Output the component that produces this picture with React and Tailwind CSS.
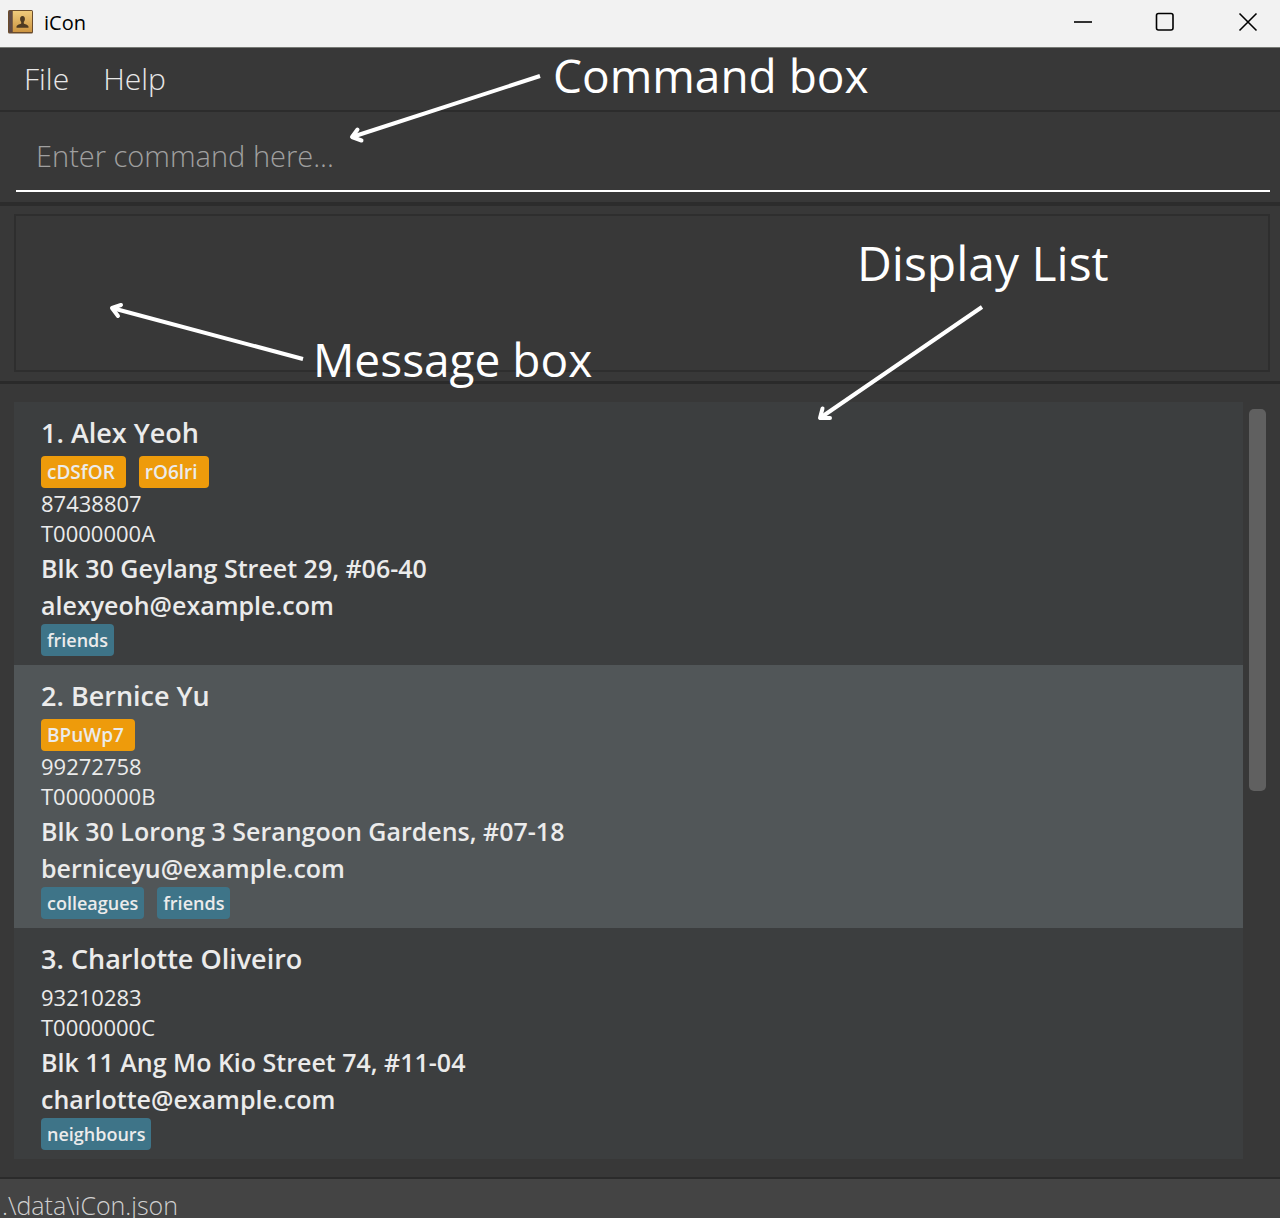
import React from "react";

const people = [
  {
    name: "Alex Yeoh",
    modules: ["cDSfOR", "rO6lri"],
    phone: "87438807",
    id: "T0000000A",
    address: "Blk 30 Geylang Street 29, #06-40",
    email: "alexyeoh@example.com",
    tags: ["friends"],
  },
  {
    name: "Bernice Yu",
    modules: ["BPuWp7"],
    phone: "99272758",
    id: "T0000000B",
    address: "Blk 30 Lorong 3 Serangoon Gardens, #07-18",
    email: "berniceyu@example.com",
    tags: ["colleagues", "friends"],
  },
  {
    name: "Charlotte Oliveiro",
    modules: [],
    phone: "93210283",
    id: "T0000000C",
    address: "Blk 11 Ang Mo Kio Street 74, #11-04",
    email: "charlotte@example.com",
    tags: ["neighbours"],
  },
];

function AppIcon() {
  return (
    <svg width="26" height="25" viewBox="0 0 26 25" aria-hidden="true">
      <defs>
        <linearGradient id="cover" x1="0" y1="0" x2="0" y2="1">
          <stop offset="0" stopColor="#f0cb7c" />
          <stop offset="1" stopColor="#cd9541" />
        </linearGradient>
      </defs>
      <rect x="0" y="0" width="25" height="23.500" rx="1.5" fill="#6b4c2c" />
      <rect x="4.5" y="1" width="19.500" height="21" fill="url(#cover)" />
      <rect x="1" y="1" width="3.5" height="21.500" fill="#5f4a45" />
      <path d="M14.500 6c1.700 0 2.600 1.300 2.400 3.200-.1 1.300-.7 2.200-1.100 2.800v1.500c.4.800 4.700 1 4.700 3.200v1H8.500v-1c0-2.200 4.300-2.400 4.700-3.200V12c-.5-.6-1-1.500-1.100-2.800C11.900 7.300 12.800 6 14.500 6z" fill="#4d3a22" />
    </svg>
  );
}

function TitleBar() {
  return (
    <header className="flex h-12 items-center justify-between border-b border-[#777a75] bg-[#f2f2f2] pb-[2px] pl-2 text-black">
      <div className="flex items-center gap-2.5">
        <AppIcon />
        <h1 className="text-[20px] leading-6">iCon</h1>
      </div>
      <div className="flex h-full">
        <button aria-label="Minimize" className="flex w-[82px] items-center justify-center pb-[2px]">
          <svg width="20" height="20" viewBox="0 0 20 20" fill="none" stroke="currentColor" strokeWidth="1.6">
            <path d="M1 10h18" />
          </svg>
        </button>
        <button aria-label="Maximize" className="flex w-[82px] items-center justify-center pb-[2px]">
          <svg width="20" height="20" viewBox="0 0 20 20" fill="none" stroke="currentColor" strokeWidth="1.6">
            <rect x="1.500" y="1.500" width="16.500" height="16.500" rx="2" />
          </svg>
        </button>
        <button aria-label="Close" className="flex w-[74px] items-center justify-center pb-[2px] pl-[10px]">
          <svg width="20" height="20" viewBox="0 0 20 20" fill="none" stroke="currentColor" strokeWidth="1.6">
            <path d="M1.500 1.500l17 17M18.500 1.500l-17 17" />
          </svg>
        </button>
      </div>
    </header>
  );
}

function PersonCard({ person, index }) {
  return (
    <li className="bg-[#3c3e3f] px-[27px] pt-[10px] pb-[9px] text-[#ebebeb] even:bg-[#515658]">
      <h2 className="pb-[2px] text-[27px] leading-[42px] font-semibold">
        {index + 1}. {person.name}
      </h2>
      {person.modules.length > 0 && (
        <ul className="flex gap-[13px]">
          {person.modules.map((m) => (
            <li key={m} className="rounded-[4px] bg-[#ee9b0b] pr-[11px] pl-[6px] text-[19px] leading-8 font-semibold">
              {m}
            </li>
          ))}
        </ul>
      )}
      <p className="text-[22px] leading-[30px]">{person.phone}</p>
      <p className="text-[22px] leading-[31px]">{person.id}</p>
      <p className="text-[25px] leading-[38px] font-semibold">{person.address}</p>
      <p className="text-[25px] leading-[37px] font-semibold">{person.email}</p>
      <ul className="flex gap-[13px]">
        {person.tags.map((t) => (
          <li key={t} className="rounded-[4px] bg-[#3e7488] px-[6px] text-[18px] leading-8 font-semibold">
            {t}
          </li>
        ))}
      </ul>
    </li>
  );
}

function Arrow({ className, width, height, shaft, head }) {
  return (
    <svg className={className} width={width} height={height} fill="none" stroke="#fff" strokeWidth="4" aria-hidden="true">
      <path d={shaft} />
      <path d={head} strokeLinecap="round" strokeLinejoin="round" />
    </svg>
  );
}

function Annotations() {
  return (
    <div className="pointer-events-none absolute inset-0 text-[46px] leading-[60px] whitespace-nowrap text-white">
      <p className="absolute top-[45px] left-[553px]">Command box</p>
      <Arrow className="absolute top-[70px] left-[345px]" width={200} height={80} shaft="M7 67L195 6" head="M12.500 59.500L7 67L16.500 70.500" />
      <p className="absolute top-[329px] left-[313px]">Message box</p>
      <Arrow className="absolute top-[295px] left-[105px]" width={205} height={75} shaft="M7 13L198 64" head="M16 10L7 13L13 21" />
      <p className="absolute top-[233px] left-[857px] text-[48px]">Display List</p>
      <Arrow className="absolute top-[300px] left-[812px]" width={180} height={130} shaft="M8 118L170 7" head="M10.500 108.500L8 118L18 118" />
    </div>
  );
}

export default function App() {
  return (
    <div className="relative flex min-h-screen flex-col overflow-hidden bg-[#383838] font-['Open_Sans','Noto_Sans',sans-serif]">
      <TitleBar />
      <nav className="flex h-16 items-center gap-[34px] border-b-2 border-[#2c2c2c] px-6 pb-[2px] text-[30px] font-light text-[#e8e8e8]">
        <button>File</button>
        <button>Help</button>
      </nav>
      <section className="border-b-4 border-[#2c2c2c] pt-2 pr-[10px] pb-[10px] pl-4">
        <input
          aria-label="Command"
          placeholder="Enter command here..."
          className="block h-[72px] w-full border-b-2 border-white bg-transparent px-5 text-[29px] font-light text-white outline-none placeholder:text-[#a0a0a0]"
        />
      </section>
      <section className="border-b-[3px] border-[#2a2a2a] pt-2 pr-[10px] pb-[9px] pl-[14px]">
        <output aria-label="Message" className="block h-[158px] border-2 border-[#2e2e2e]" />
      </section>
      <main className="flex grow gap-[6px] pt-[18px] pr-[14px] pb-[18px] pl-[14px]">
        <ol className="grow">
          {people.map((p, i) => (
            <PersonCard key={p.id} person={p} index={i} />
          ))}
        </ol>
        <div className="flex w-[17px] flex-col pt-[7px]">
          <div className="h-[382px] rounded-[5px] bg-[#606060]" />
        </div>
      </main>
      <footer className="border-t-2 border-[#2b2b2b] bg-[#444444] px-[2px] pt-[13px] text-[25px] leading-[26px] font-light whitespace-nowrap text-[#d0d0d0]">
        .\data\iCon.json
      </footer>
      <Annotations />
    </div>
  );
}
